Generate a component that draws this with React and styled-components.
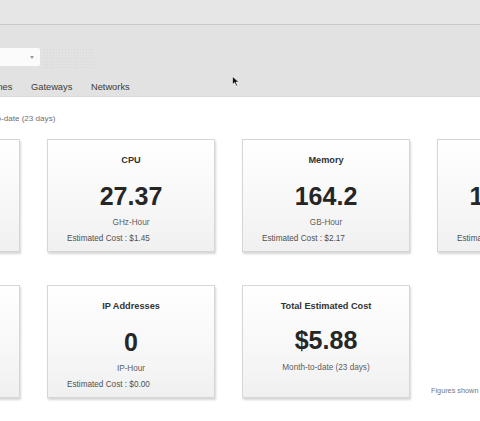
import React from "react";
import styled, { createGlobalStyle } from "styled-components";

const Global = createGlobalStyle`
  html, body { margin: 0; padding: 0; background: #ffffff; }
  body { width: 480px; height: 421px; overflow: hidden; font-family: "Liberation Sans", Arial, sans-serif; }
  #root { position: relative; width: 480px; height: 421px; overflow: hidden; }
`;

const Header = styled.div`
  height: 24px;
  background: #e6e6e6;
  border-bottom: 1px solid #c9c9c9;
`;

const Toolbar = styled.div`
  height: 72px;
  background: #e2e2e2;
  border-bottom: 1px solid #dadada;
  display: flex;
  flex-direction: column;
  padding-top: 23px;
  box-sizing: border-box;
`;

const Controls = styled.div`
  display: flex;
  align-items: flex-start;
  gap: 3px;
  height: 22px;
`;

const Select = styled.div`
  width: 40px;
  height: 18px;
  background: #fbfbfb;
  border-radius: 0 2px 2px 0;
  display: flex;
  align-items: center;
  justify-content: flex-end;
  padding-right: 6px;
  box-sizing: border-box;
`;

const Caret = styled.span`
  width: 0;
  height: 0;
  border-left: 2.5px solid transparent;
  border-right: 2.5px solid transparent;
  border-top: 3px solid #9a9a9a;
`;

const Dotted = styled.div`
  width: 52px;
  height: 22px;
  background-image: radial-gradient(rgba(0, 0, 0, 0.045) 0.6px, transparent 0.8px);
  background-size: 3px 3px;
`;

const Tabs = styled.div`
  display: flex;
  gap: 18.6px;
  margin-top: 11px;
  margin-left: -27.4px;
  font-size: 9.3px;
  line-height: 12px;
  color: #3a3a3a;
`;

const Tab = styled.span`
  white-space: nowrap;
`;

const Content = styled.div`
  padding-top: 17px;
`;

const SubHeader = styled.div`
  margin-left: -31px;
  font-size: 8.1px;
  line-height: 10px;
  color: #707070;
  white-space: nowrap;
`;

const Grid = styled.div`
  display: grid;
  grid-template-columns: repeat(4, 168px);
  grid-auto-rows: 113px;
  column-gap: 27px;
  row-gap: 33px;
  margin-left: -148px;
  margin-top: 15px;
`;

const Card = styled.div`
  box-sizing: border-box;
  border: 1px solid #d6d6d6;
  background: linear-gradient(180deg, #ffffff 0%, #f7f7f7 60%, #f0f0f0 100%);
  box-shadow: 1px 2px 2px rgba(0, 0, 0, 0.16);
  display: flex;
  flex-direction: column;
  padding: 14px 19px 0;
`;

const Title = styled.div`
  text-align: center;
  font-size: 9.2px;
  line-height: 12px;
  font-weight: 700;
  color: #333;
  white-space: nowrap;
`;

const Value = styled.div`
  margin-top: ${(p) => (p.$compact ? 14 : 16)}px;
  text-align: center;
  font-size: 25px;
  line-height: 28px;
  font-weight: 700;
  color: #262626;
  white-space: nowrap;
`;

const Unit = styled.div`
  margin-top: ${(p) => (p.$compact ? 9 : 8)}px;
  text-align: center;
  font-size: 8.2px;
  line-height: 10px;
  color: #5e5e5e;
  white-space: nowrap;
`;

const Cost = styled.div`
  margin-top: 6px;
  font-size: 8.2px;
  line-height: 10px;
  color: #505050;
  white-space: nowrap;
`;

const Note = styled.div`
  align-self: end;
  margin-left: -6px;
  margin-bottom: 2px;
  font-size: 7.3px;
  line-height: 10px;
  color: #777;
  white-space: nowrap;
`;

const Cursor = styled.svg`
  position: absolute;
  left: 232px;
  top: 76px;
  width: 8px;
  height: 11px;
`;

const cards = [
  { title: "Virtual Machines", value: "0", unit: "VM-Hour", cost: "$0.00" },
  { title: "CPU", value: "27.37", unit: "GHz-Hour", cost: "$1.45" },
  { title: "Memory", value: "164.2", unit: "GB-Hour", cost: "$2.17" },
  { title: "Storage", value: "11264.00", unit: "GB-Hour", cost: "$2.26" },
  { title: "Bandwidth", value: "0", unit: "GB", cost: "$0.00" },
  { title: "IP Addresses", value: "0", unit: "IP-Hour", cost: "$0.00" },
];

export default function App() {
  return (
    <>
      <Global />
      <Header />
      <Toolbar>
        <Controls>
          <Select>
            <Caret />
          </Select>
          <Dotted />
        </Controls>
        <Tabs>
          <Tab>Machines</Tab>
          <Tab>Gateways</Tab>
          <Tab>Networks</Tab>
        </Tabs>
      </Toolbar>
      <Content>
        <SubHeader>Month-to-date (23 days)</SubHeader>
        <Grid>
          {cards.map((c) => (
            <Card key={c.title}>
              <Title>{c.title}</Title>
              <Value>{c.value}</Value>
              <Unit>{c.unit}</Unit>
              <Cost>Estimated Cost : {c.cost}</Cost>
            </Card>
          ))}
          <Card>
            <Title>Total Estimated Cost</Title>
            <Value $compact>$5.88</Value>
            <Unit $compact>Month-to-date (23 days)</Unit>
          </Card>
          <Note>Figures shown are estimates and may differ from the final invoice</Note>
        </Grid>
      </Content>
      <Cursor viewBox="0 0 8 11">
        <path d="M0.5 0.5 L0.5 8.5 L2.6 6.6 L4.1 10 L5.4 9.4 L4 6.1 L6.8 6.1 Z" fill="#111" stroke="#fff" strokeWidth="0.6" />
      </Cursor>
    </>
  );
}
